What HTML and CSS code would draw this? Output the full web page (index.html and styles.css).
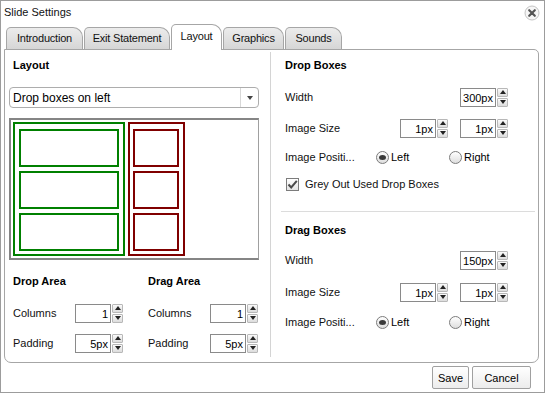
FILE: index.html
```html
<!DOCTYPE html>
<html>
  <head>
    <title>Slide Settings</title>
    <link rel="stylesheet" href="styles.css">
  </head>
  <body>
    <div class="dialog">
      <div class="titlebar">
        <span class="title">Slide Settings</span>
        <span class="close">
          <svg width="16" height="16" viewBox="0 0 16 16">
            <circle cx="8" cy="8" r="7" fill="#f6f6f6" stroke="#c4c4c4" stroke-width="1"/>
            <path d="M5.2 5.2 L10.8 10.8 M10.8 5.2 L5.2 10.8" stroke="#555" stroke-width="2.2" stroke-linecap="round"/>
          </svg>
        </span>
      </div>

      <div class="tabs">
        <div class="tab tab-intro">Introduction</div>
        <div class="tab tab-exit">Exit Statement</div>
        <div class="tab tab-layout active">Layout</div>
        <div class="tab tab-graphics">Graphics</div>
        <div class="tab tab-sounds">Sounds</div>
      </div>

      <div class="panel">
        <div class="col col-left">
          <div class="heading">Layout</div>
          <div class="select">
            <span class="select-text">Drop boxes on left</span>
            <span class="select-arrow"></span>
          </div>
          <div class="preview">
            <div class="preview-group drop">
              <div class="preview-box"></div>
              <div class="preview-box"></div>
              <div class="preview-box"></div>
            </div>
            <div class="preview-group drag">
              <div class="preview-box"></div>
              <div class="preview-box"></div>
              <div class="preview-box"></div>
            </div>
          </div>
          <div class="areas">
            <div class="area">
              <div class="heading">Drop Area</div>
              <div class="field first">
                <span class="label">Columns</span>
                <div class="spinner"><span class="spin-value">1</span><span class="spin-btns"><span class="spin-up"></span><span class="spin-down"></span></span></div>
              </div>
              <div class="field second">
                <span class="label">Padding</span>
                <div class="spinner"><span class="spin-value">5px</span><span class="spin-btns"><span class="spin-up"></span><span class="spin-down"></span></span></div>
              </div>
            </div>
            <div class="area">
              <div class="heading">Drag Area</div>
              <div class="field first">
                <span class="label">Columns</span>
                <div class="spinner"><span class="spin-value">1</span><span class="spin-btns"><span class="spin-up"></span><span class="spin-down"></span></span></div>
              </div>
              <div class="field second">
                <span class="label">Padding</span>
                <div class="spinner"><span class="spin-value">5px</span><span class="spin-btns"><span class="spin-up"></span><span class="spin-down"></span></span></div>
              </div>
            </div>
          </div>
        </div>

        <div class="col col-right">
          <div class="heading">Drop Boxes</div>
          <div class="row row-width">
            <span class="label">Width</span>
            <div class="spinner"><span class="spin-value">300px</span><span class="spin-btns"><span class="spin-up"></span><span class="spin-down"></span></span></div>
          </div>
          <div class="row row-size">
            <span class="label">Image Size</span>
            <div class="spinner"><span class="spin-value">1px</span><span class="spin-btns"><span class="spin-up"></span><span class="spin-down"></span></span></div>
            <div class="spinner"><span class="spin-value">1px</span><span class="spin-btns"><span class="spin-up"></span><span class="spin-down"></span></span></div>
          </div>
          <div class="row row-pos">
            <span class="label label-pos">Image Positi...</span>
            <span class="option option-left"><span class="radio checked"></span>Left</span>
            <span class="option"><span class="radio"></span>Right</span>
          </div>
          <div class="row row-check">
            <span class="checkbox">
              <svg width="11" height="11" viewBox="0 0 11 11">
                <path d="M1.5 5.5 L4.2 8.5 L9.8 1.8" fill="none" stroke="#4a4a4a" stroke-width="2"/>
              </svg>
            </span>
            <span>Grey Out Used Drop Boxes</span>
          </div>

          <div class="separator"></div>

          <div class="heading heading-drag">Drag Boxes</div>
          <div class="row row-width2">
            <span class="label">Width</span>
            <div class="spinner"><span class="spin-value">150px</span><span class="spin-btns"><span class="spin-up"></span><span class="spin-down"></span></span></div>
          </div>
          <div class="row row-size2">
            <span class="label">Image Size</span>
            <div class="spinner"><span class="spin-value">1px</span><span class="spin-btns"><span class="spin-up"></span><span class="spin-down"></span></span></div>
            <div class="spinner"><span class="spin-value">1px</span><span class="spin-btns"><span class="spin-up"></span><span class="spin-down"></span></span></div>
          </div>
          <div class="row row-pos2">
            <span class="label label-pos">Image Positi...</span>
            <span class="option option-left"><span class="radio checked"></span>Left</span>
            <span class="option"><span class="radio"></span>Right</span>
          </div>
        </div>
      </div>

      <div class="footer">
        <button class="btn btn-save">Save</button>
        <button class="btn btn-cancel">Cancel</button>
      </div>
    </div>
  </body>
</html>
```

FILE: styles.css
```css
body {
  margin: 0;
  background-color: #fff;
  font-family: "Liberation Sans", Arial, sans-serif;
  font-size: 11px;
  color: #111;
}

.dialog {
  width: 545px;
  height: 393px;
  box-sizing: border-box;
  border: 1px solid #9c9c9c;
  display: flex;
  flex-direction: column;
  background-color: #fff;
}

/* title bar */
.titlebar {
  height: 22px;
  display: flex;
  align-items: center;
  justify-content: space-between;
  padding: 0 4px 0 3px;
}

.close {
  display: flex;
  margin-top: 2px;
}

/* tabs */
.tabs {
  height: 26px;
  display: flex;
  align-items: flex-end;
  padding-left: 5px;
  position: relative;
  z-index: 2;
}

.tab {
  height: 22px;
  line-height: 20px;
  box-sizing: border-box;
  text-align: center;
  letter-spacing: -0.2px;
  margin-right: 1px;
  border: 1px solid #a6a6a6;
  border-bottom: none;
  border-radius: 5px 10px 0 0;
  background: linear-gradient(#ececec, #d6d6d6);
}

.tab-intro { width: 77px; }
.tab-exit { width: 86px; }
.tab-layout { width: 51px; }
.tab-graphics { width: 61px; }
.tab-sounds { width: 57px; }

.tab.active {
  height: 26px;
  line-height: 22px;
  margin-bottom: -1px;
  background: #fff;
}

/* content panel */
.panel {
  height: 314px;
  box-sizing: border-box;
  margin: 0 5px 0 3px;
  border: 1px solid #a6a6a6;
  border-radius: 0 5px 7px 7px;
  display: flex;
}

.col {
  display: flex;
  flex-direction: column;
}

.col-left {
  width: 266px;
  padding: 0 11px 0 4px;
  box-sizing: border-box;
  border-right: 1px solid #d4d4d4;
  margin: 2px 0 5px;
}

.col-right {
  flex: 1;
  padding: 0 30px 0 14px;
}

.heading {
  font-weight: bold;
  height: 16px;
  line-height: 16px;
  margin-top: 5px;
  color: #000;
}

.col-right .heading {
  margin-top: 7px;
}

.col-left > .heading {
  padding-left: 4px;
}

/* layout select */
.select {
  margin-top: 14px;
  height: 21px;
  box-sizing: border-box;
  border: 1px solid #adadad;
  border-radius: 4px;
  display: flex;
  align-items: center;
  font-size: 12px;
  color: #000;
}

.select-text {
  flex: 1;
  padding-left: 3px;
}

.select-arrow {
  width: 17px;
  height: 19px;
  border-left: 1px solid #d8d8d8;
  display: flex;
  align-items: center;
  justify-content: center;
}

.select-arrow::after {
  content: '';
  border-left: 3px solid transparent;
  border-right: 3px solid transparent;
  border-top: 4px solid #444;
}

/* layout preview */
.preview {
  margin-top: 10px;
  height: 142px;
  box-sizing: border-box;
  border: 2px solid #858585;
  border-right: 1px solid #a0a0a0;
  padding: 2px;
  display: flex;
}

.preview-group {
  height: 134px;
  box-sizing: border-box;
  display: flex;
  flex-direction: column;
  gap: 4px;
}

.preview-box {
  flex: 1;
}

.drop {
  width: 112px;
  border: 2px solid #008000;
  padding: 5px 4px 3px 4px;
}

.drop .preview-box {
  border: 2px solid #008000;
}

.drag {
  width: 57px;
  margin-left: 3px;
  border: 2px solid #800000;
  padding: 5px 4px 3px 3px;
}

.drag .preview-box {
  border: 2px solid #800000;
}

/* drop / drag area */
.areas {
  display: flex;
  gap: 25px;
  padding-left: 4px;
  margin-top: 8px;
}

.area {
  width: 110px;
}

.field {
  display: flex;
  align-items: center;
  justify-content: space-between;
  height: 20px;
}

.field.first {
  margin-top: 14px;
}

.field.second {
  margin-top: 10px;
}

/* spinner */
.spinner {
  display: flex;
  align-items: center;
  height: 19px;
  width: 48px;
}

.spin-value {
  width: 36px;
  height: 19px;
  line-height: 18px;
  box-sizing: border-box;
  border: 1px solid #8a8a8a;
  text-align: right;
  padding-right: 2px;
  font-size: 11px;
  color: #000;
}

.spin-btns {
  width: 11px;
  margin-left: 1px;
  display: flex;
  flex-direction: column;
  gap: 1px;
}

.spin-up,
.spin-down {
  height: 9px;
  box-sizing: border-box;
  border: 1px solid #b8b8b8;
  border-radius: 1px;
  background: linear-gradient(#fafafa, #dcdcdc);
  display: flex;
  align-items: center;
  justify-content: center;
}

.spin-up::after {
  content: '';
  border-left: 3px solid transparent;
  border-right: 3px solid transparent;
  border-bottom: 4px solid #222;
}

.spin-down::after {
  content: '';
  border-left: 3px solid transparent;
  border-right: 3px solid transparent;
  border-top: 4px solid #222;
}

/* right column rows */
.row {
  display: flex;
  align-items: center;
  height: 20px;
}

.row .label {
  flex: 1;
}

.row-size .spinner + .spinner,
.row-size2 .spinner + .spinner {
  margin-left: 12px;
}

.row-width { margin-top: 14px; }
.row-size { margin-top: 11px; }
.row-pos { margin-top: 9px; }
.row-check { margin-top: 7px; padding-left: 1px; }
.row-width2 { margin-top: 12px; }
.row-size2 { margin-top: 12px; }
.row-pos2 { margin-top: 10px; }

.row .label-pos {
  flex: none;
  width: 91px;
}

.option {
  display: flex;
  align-items: center;
  gap: 2px;
  color: #000;
}

.option-left {
  width: 73px;
}

.radio {
  width: 13px;
  height: 13px;
  box-sizing: border-box;
  border: 1px solid #7c7c7c;
  border-radius: 50%;
  background: linear-gradient(#fff, #dedede);
  display: flex;
  align-items: center;
  justify-content: center;
}

.radio.checked::after {
  content: '';
  width: 7px;
  height: 5px;
  border-radius: 50%;
  background-color: #3a3a3a;
}

.checkbox {
  width: 13px;
  height: 13px;
  box-sizing: border-box;
  border: 1px solid #7c7c7c;
  background: linear-gradient(#fff, #e4e4e4);
  display: flex;
  align-items: center;
  justify-content: center;
  margin-right: 6px;
}

.separator {
  height: 1px;
  background-color: #dcdcdc;
  margin: 17px -27px 0 -4px;
}

.col-right .heading-drag {
  margin-top: 10px;
}

/* footer buttons */
.footer {
  flex: 1;
  display: flex;
  justify-content: flex-end;
  align-items: flex-start;
  padding: 3px 13px 0 0;
  gap: 3px;
}

.btn {
  height: 23px;
  border: 1px solid #a0a0a0;
  border-radius: 2px;
  background: linear-gradient(#ffffff, #ececec);
  font-family: "Liberation Sans", Arial, sans-serif;
  font-size: 11px;
  color: #000;
  padding: 0;
}

.btn-save {
  width: 37px;
}

.btn-cancel {
  width: 59px;
}
```
